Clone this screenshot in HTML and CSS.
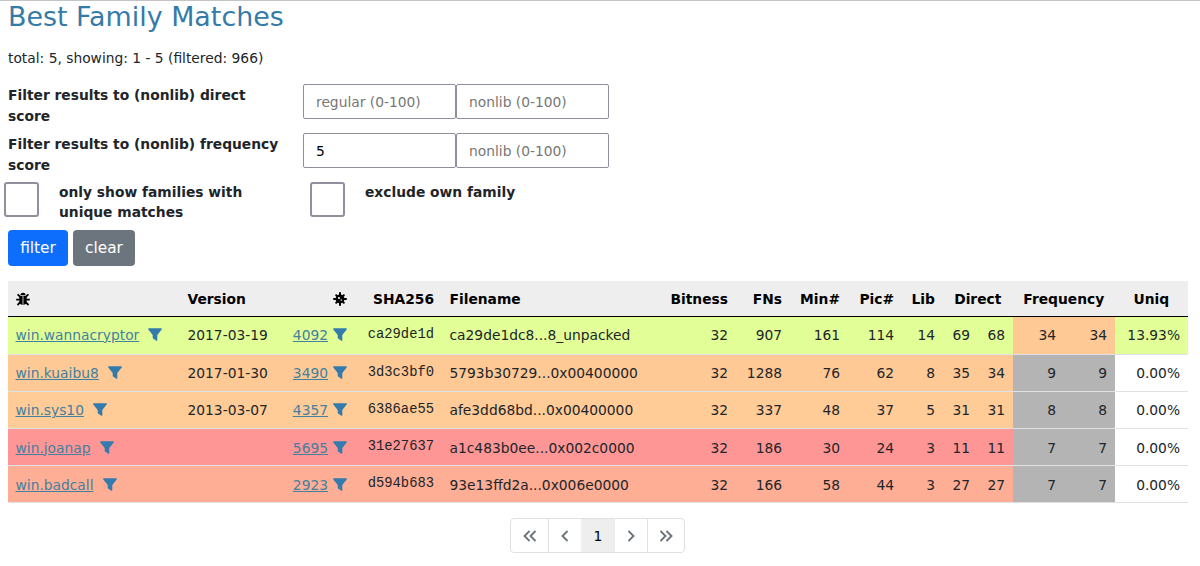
FILE: index.html
```
<!DOCTYPE html>
<html lang="en">
<head>
<meta charset="utf-8">
<title>Best Family Matches</title>
<link rel="stylesheet" href="styles.css">
</head>
<body>
<svg class="defs" width="0" height="0">
<symbol id="funnel" viewBox="0 0 14 13"><path d="M.9.3h12.2c.7 0 1 .8.6 1.300L9.300 7v5.200c0 .6-.6.800-1 .5L5.100 10.600c-.3-.2-.4-.5-.4-.8V7L.3 1.600C-.1 1.100.200.3.900.3z"/></symbol>
<symbol id="bug" viewBox="0 0 14 14"><path d="M4.400 3.300a2.600 2.600 0 0 1 5.200 0z"/><path d="M3.300 4h3.300v8.900C4.500 12.700 3.300 11.300 3.300 9.300zM7.400 4h3.300v5.300c0 2-1.200 3.400-3.300 3.600z"/><path d="M1.600 2.300l2.700 2.500M12.400 2.300L9.700 4.800M.2 7.600h3.600M10.200 7.600h3.600M1.500 13l2.800-2.900M12.500 13l-2.800-2.900" fill="none" stroke="#000" stroke-width="1.800"/></symbol>
<symbol id="virus" viewBox="0 0 14 14"><path d="M7 1v12M1 7h12M3.200 3.200l7.600 7.600M10.800 3.200l-7.600 7.600" fill="none" stroke="#000" stroke-width="2" stroke-linecap="round"/><circle cx="7" cy="7" r="4.400"/><circle cx="6" cy="6" r="1.100" fill="#eee"/><circle cx="8.300" cy="8" r=".8" fill="#eee"/></symbol>
</svg>
<h1 class="title">Best Family Matches</h1>
<p class="summary">total: 5, showing: 1 - 5 (filtered: 966)</p>
<form class="filters">
<div class="score-row"><label class="label">Filter results to (nonlib) direct score</label><input class="score" placeholder="regular (0-100)"><input class="score second" placeholder="nonlib (0-100)"></div>
<div class="score-row"><label class="label">Filter results to (nonlib) frequency score</label><input class="score" value="5"><input class="score second" placeholder="nonlib (0-100)"></div>
<div class="checks">
<div class="check"><span class="box"></span><label>only show families with unique matches</label></div>
<div class="check"><span class="box"></span><label>exclude own family</label></div>
</div>
<div class="actions"><button type="button" class="btn primary">filter</button><button type="button" class="btn secondary">clear</button></div>
</form>
<table class="matches">
<colgroup><col class="w-family"><col class="w-version"><col class="w-id"><col class="w-sha"><col class="w-file"><col class="w-bit"><col class="w-fns"><col class="w-min"><col class="w-pic"><col class="w-lib"><col class="w-direct"><col class="w-direct"><col class="w-freq"><col class="w-freq"><col class="w-uniq"></colgroup>
<thead><tr><th class="l"><svg class="head-icon"><use href="#bug"/></svg></th><th class="l">Version</th><th class="id"><svg class="head-icon"><use href="#virus"/></svg></th><th>SHA256</th><th class="l">Filename</th><th>Bitness</th><th>FNs</th><th>Min#</th><th>Pic#</th><th>Lib</th><th class="c" colspan="2">Direct</th><th class="c" colspan="2">Frequency</th><th class="c">Uniq</th></tr></thead>
<tbody>
<tr class="lime first"><td class="l"><a href="#">win.wannacryptor</a><svg class="funnel"><use href="#funnel"/></svg></td><td class="l">2017-03-19</td><td class="id"><a href="#">4092</a><svg class="funnel near"><use href="#funnel"/></svg></td><td class="mono">ca29de1d</td><td class="l">ca29de1dc8...8_unpacked</td><td>32</td><td>907</td><td>161</td><td>114</td><td>14</td><td>69</td><td>68</td><td class="orange">34</td><td class="orange">34</td><td>13.93%</td></tr>
<tr class="orange"><td class="l"><a href="#">win.kuaibu8</a><svg class="funnel"><use href="#funnel"/></svg></td><td class="l">2017-01-30</td><td class="id"><a href="#">3490</a><svg class="funnel near"><use href="#funnel"/></svg></td><td class="mono">3d3c3bf0</td><td class="l">5793b30729...0x00400000</td><td>32</td><td>1288</td><td>76</td><td>62</td><td>8</td><td>35</td><td>34</td><td class="grey">9</td><td class="grey">9</td><td class="none">0.00%</td></tr>
<tr class="amber"><td class="l"><a href="#">win.sys10</a><svg class="funnel"><use href="#funnel"/></svg></td><td class="l">2013-03-07</td><td class="id"><a href="#">4357</a><svg class="funnel near"><use href="#funnel"/></svg></td><td class="mono">6386ae55</td><td class="l">afe3dd68bd...0x00400000</td><td>32</td><td>337</td><td>48</td><td>37</td><td>5</td><td>31</td><td>31</td><td class="grey">8</td><td class="grey">8</td><td class="none">0.00%</td></tr>
<tr class="red low"><td class="l"><a href="#">win.joanap</a><svg class="funnel"><use href="#funnel"/></svg></td><td class="l"></td><td class="id"><a href="#">5695</a><svg class="funnel near"><use href="#funnel"/></svg></td><td class="mono">31e27637</td><td class="l">a1c483b0ee...0x002c0000</td><td>32</td><td>186</td><td>30</td><td>24</td><td>3</td><td>11</td><td>11</td><td class="grey">7</td><td class="grey">7</td><td class="none">0.00%</td></tr>
<tr class="salmon low"><td class="l"><a href="#">win.badcall</a><svg class="funnel"><use href="#funnel"/></svg></td><td class="l"></td><td class="id"><a href="#">2923</a><svg class="funnel near"><use href="#funnel"/></svg></td><td class="mono">d594b683</td><td class="l">93e13ffd2a...0x006e0000</td><td>32</td><td>166</td><td>58</td><td>44</td><td>3</td><td>27</td><td>27</td><td class="grey">7</td><td class="grey">7</td><td class="none">0.00%</td></tr>
</tbody>
</table>
<nav class="pager">
<a class="page wide"><svg width="14" height="12" viewBox="0 0 14 12"><path d="M6.500 1L1.500 6l5 5M12.500 1l-5 5 5 5"/></svg></a>
<a class="page prev"><svg width="8" height="12" viewBox="0 0 8 12"><path d="M6.500 1L1.500 6l5 5"/></svg></a>
<a class="page current">1</a>
<a class="page next"><svg width="8" height="12" viewBox="0 0 8 12"><path d="M1.500 1l5 5-5 5"/></svg></a>
<a class="page last"><svg width="14" height="12" viewBox="0 0 14 12"><path d="M1.500 1l5 5-5 5M7.500 1l5 5-5 5"/></svg></a>
</nav>
</body>
</html>
```
FILE: styles.css
```
* { box-sizing: border-box; }
body { margin: 0; padding: 0 8px; height: 566px; overflow: hidden; border-top: 1px solid #c4c4c4; background: #fff; color: #212529; font: 13.82px/20px "DejaVu Sans", sans-serif; }
.defs { position: absolute; }
.title { margin: 0; height: 31px; color: #357ba8; font-size: 26.9px; font-weight: 400; line-height: 31px; white-space: nowrap; }
.summary { margin: 16px 0; line-height: 21px; }
.filters { display: flex; flex-direction: column; font-weight: 700; }
.score-row { display: flex; height: 49px; line-height: 21px; }
.label { width: 295px; padding-right: 20px; }
.score { width: 153px; height: 35px; margin: -1px 0 0; padding: 0 12px; border: 1px solid #8f8f9d; border-radius: 2px; background: #fff; color: #000; font: 13.82px "DejaVu Sans", sans-serif; }
.score.second { width: 153px; }
.score::placeholder { color: #777; opacity: 1; }
.checks { display: flex; height: 47px; margin-left: -4px; line-height: 20px; }
.check { display: flex; width: 306px; margin-top: -1px; }
.check label { width: 210px; margin-left: 20px; }
.box { flex: none; width: 35px; height: 35px; border: 2px solid #8f8f9d; border-radius: 3px; }
.actions { display: flex; gap: 5px; }
.btn { height: 36px; padding: 0; border: 0; border-radius: 4px; color: #fff; font: 15.36px "DejaVu Sans", sans-serif; }
.primary { width: 60px; background: #0d6efd; }
.secondary { width: 62px; background: #6c757d; }
.matches { width: 1180px; margin-top: 15px; border-collapse: separate; border-spacing: 0; table-layout: fixed; }
.w-family { width: 172px; } .w-version { width: 96px; } .w-id { width: 80px; } .w-sha { width: 86px; } .w-file { width: 213px; } .w-bit { width: 81px; } .w-fns { width: 54px; } .w-min { width: 58px; } .w-pic { width: 54px; } .w-lib { width: 41px; } .w-direct { width: 35px; } .w-freq { width: 51px; } .w-uniq { width: 73px; }
th { height: 36px; padding: 0 8px 0 7.5px; background: #eee; color: #000; border-bottom: 1px solid #000; text-align: right; white-space: nowrap; }
td { height: 37px; padding: 0 8px 0 7.5px; border-bottom: 1px solid #dee2e6; text-align: right; white-space: nowrap; }
.first td { height: 38px; padding-bottom: 2px; }
.low td { padding-top: 1px; }
.l { text-align: left; }
.c { text-align: center; }
.id { padding-right: 9px; }
a { color: #44809f; }
.head-icon { width: 14px; height: 14px; vertical-align: -2px; }
.funnel { width: 14px; height: 13px; margin-left: 9px; fill: #337bad; vertical-align: -1px; }
.near { margin-left: 5px; }
td.mono { padding-top: 0; padding-bottom: 1px; font: 13.8px/20px "Liberation Mono", monospace; }
.lime { background: #e1ff96; }
.orange { background: #ffc996; }
.amber { background: #ffcb96; }
.red { background: #ff9696; }
.salmon { background: #ffae96; }
.grey { background: #b4b4b4; }
.none { background: #fff; }
.pager { display: flex; width: 175px; height: 35px; margin: 15px auto 0 502px; border: 1px solid #dee2e6; border-radius: 4px; }
.page { display: flex; align-items: center; justify-content: center; width: 32px; }
.page svg { fill: none; stroke: #6c757d; stroke-width: 1.9; }
.wide { width: 38px; border-right: 1px solid #dee2e6; }
.current { width: 34px; background: #eee; color: #000; }
.next { width: 33px; border-right: 1px solid #dee2e6; }
.last { width: 36px; }
```
